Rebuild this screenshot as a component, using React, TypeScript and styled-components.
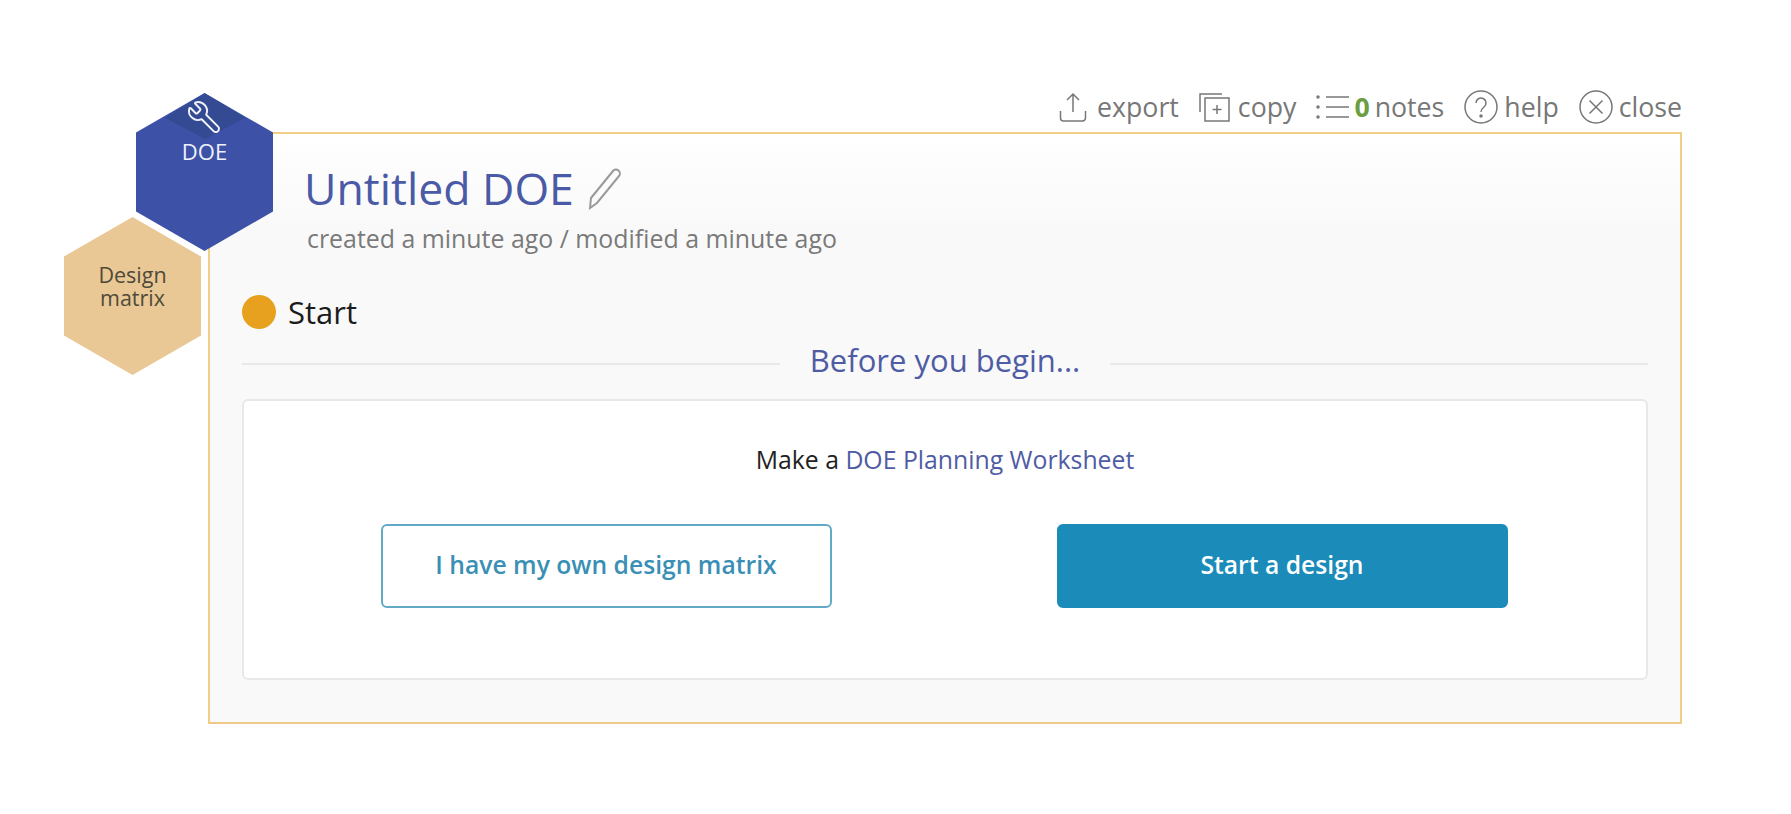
import React from "react";
import styled, { createGlobalStyle } from "styled-components";
import { Wrench } from "lucide-react";

const Global = createGlobalStyle`
  html, body { margin: 0; padding: 0; background: #fff; }
  body { font-family: "Open Sans", "Liberation Sans", sans-serif; }
`;

const Page = styled.div`
  position: relative;
  box-sizing: border-box;
  width: 1791px;
  height: 814px;
  padding: 88px 109px 0 208px;
  overflow: hidden;
`;

const Toolbar = styled.nav`
  box-sizing: border-box;
  display: flex;
  justify-content: flex-end;
  align-items: center;
  height: 44px;
  padding-bottom: 6px;
  gap: 20px;
  color: #777;
  font-size: 26.7px;
  line-height: 36px;
`;

const Tool = styled.span<{ $gap?: number }>`
  display: inline-flex;
  align-items: center;
  gap: ${(p) => p.$gap ?? 8}px;
`;

const Icon = styled.svg`
  display: block;
  flex: none;
  fill: none;
  stroke: #777;
  stroke-width: 1.5;
`;

const PencilIcon = styled(Icon)`
  stroke: #9a9a9a;
  stroke-width: 2;
`;

const NoteText = styled.span`
  display: inline-flex;
  gap: 5px;
`;

const Count = styled.b`
  color: #6a9e3f;
  font-weight: 700;
`;

const Panel = styled.section`
  box-sizing: border-box;
  height: 592px;
  padding: 24px 32px 0;
  border: 2px solid #f0cf85;
  border-bottom-color: #efc98a;
  background: linear-gradient(#fff 0, #f9f9f9 90px);
`;

const TitleRow = styled.div`
  display: flex;
  align-items: center;
  gap: 14px;
  padding-left: 62px;
  height: 60px;
`;

const Title = styled.h1`
  margin: 0;
  font-size: 44.6px;
  font-weight: 400;
  line-height: 60px;
  color: #4a5aa6;
`;

const Meta = styled.p`
  margin: 3px 0 0;
  padding-left: 65px;
  font-size: 24.9px;
  line-height: 34px;
  color: #7a7a7a;
`;

const StatusRow = styled.div`
  display: flex;
  align-items: center;
  gap: 12px;
  margin-top: 35px;
  height: 44px;
`;

const Dot = styled.span`
  width: 34px;
  height: 34px;
  border-radius: 50%;
  background: #e8a11f;
`;

const StatusText = styled.span`
  font-size: 31px;
  color: #1c1c1c;
`;

const Divider = styled.div`
  display: flex;
  align-items: center;
  gap: 30px;
  margin-top: 8px;
  height: 44px;
  font-size: 31px;
  color: #4f5ca4;
  &::before, &::after {
    content: "";
    flex: 1;
    height: 2px;
    background: #e8e8e8;
  }
`;

const DividerLabel = styled.span`
  padding-bottom: 8px;
`;

const Card = styled.div`
  box-sizing: border-box;
  height: 281px;
  margin-top: 13px;
  padding-top: 40px;
  background: #fff;
  border: 2px solid #e8e8e8;
  border-radius: 6px;
`;

const Lead = styled.p`
  margin: 0;
  height: 36px;
  line-height: 36px;
  text-align: center;
  font-size: 24.8px;
  color: #222;
`;

const DocLink = styled.a`
  color: #4f5ca4;
  text-decoration: none;
`;

const Actions = styled.div`
  display: flex;
  justify-content: center;
  gap: 225px;
  margin-top: 47px;
  padding-right: 2px;
`;

const Button = styled.button<{ $solid?: boolean }>`
  box-sizing: border-box;
  width: 451px;
  height: 84px;
  padding: 0 0 4px;
  border-radius: 6px;
  border: 2px solid ${(p) => (p.$solid ? "#1b8bb9" : "#62a9c6")};
  background: ${(p) => (p.$solid ? "#1b8bb9" : "#fff")};
  color: ${(p) => (p.$solid ? "#fff" : "#3a8fb5")};
  font: 600 24.7px "Open Sans", sans-serif;
`;

const Hex = styled.div<{ $bg: string; $x: number; $y: number }>`
  position: absolute;
  left: ${(p) => p.$x}px;
  top: ${(p) => p.$y}px;
  width: 137px;
  height: 158px;
  background: ${(p) => p.$bg};
  clip-path: polygon(50% 0, 100% 25%, 100% 75%, 50% 100%, 0 75%, 0 25%);
  display: flex;
  flex-direction: column;
  align-items: center;
  text-align: center;
`;

const Diamond = styled.div`
  position: absolute;
  left: 29px;
  top: 0;
  width: 80px;
  height: 46px;
  background: #344a93;
  clip-path: polygon(50% 0, 100% 54%, 50% 100%, 0 54%);
`;

const WrenchIcon = styled(Wrench)`
  position: absolute;
  left: 50px;
  top: 6px;
  color: #f1f3fb;
  transform: scaleX(-1);
`;

const HexLabel = styled.span`
  margin-top: 44px;
  font-size: 22px;
  line-height: 28px;
  color: #eef1fb;
`;

const MatrixLabel = styled.span`
  margin-top: 46px;
  font-size: 21.5px;
  line-height: 23px;
  color: #4f4a38;
`;

export default function App() {
  return (
    <Page>
      <Global />
      <Hex $bg="#3d52a6" $x={136} $y={93}>
        <Diamond />
        <WrenchIcon size={36} strokeWidth={1.3} />
        <HexLabel>DOE</HexLabel>
      </Hex>
      <Hex $bg="#e9c896" $x={64} $y={217}>
        <MatrixLabel>Design<br />matrix</MatrixLabel>
      </Hex>

      <Toolbar>
        <Tool $gap={10}>
          <Icon width="28" height="30" viewBox="0 0 28 30">
            <path d="M14 20V2M8 8l6-6 6 6M1.500 19v7a3 3 0 0 0 3 3h19a3 3 0 0 0 3-3v-7" />
          </Icon>
          export
        </Tool>
        <Tool $gap={8}>
          <Icon width="31" height="29" viewBox="0 0 31 29">
            <path d="M1 19V1h22" />
            <rect x="6" y="5" width="24" height="23" />
            <path d="M18 12v9M13.500 16.500h9" />
          </Icon>
          copy
        </Tool>
        <Tool $gap={5}>
          <Icon width="33" height="26" viewBox="0 0 33 26">
            <path d="M10 3h23M10 13h23M10 23h23" />
            <circle cx="2" cy="3" r="1" fill="#777" />
            <circle cx="2" cy="13" r="1" fill="#777" />
            <circle cx="2" cy="23" r="1" fill="#777" />
          </Icon>
          <NoteText><Count>0</Count><span>notes</span></NoteText>
        </Tool>
        <Tool $gap={6}>
          <Icon width="34" height="34" viewBox="0 0 34 34">
            <circle cx="17" cy="17" r="16" />
            <path d="M12 13a5 5 0 1 1 8 4c-2 1.500-3 2.500-3 5" />
            <circle cx="17" cy="26" r="1" fill="#777" />
          </Icon>
          help
        </Tool>
        <Tool $gap={6}>
          <Icon width="34" height="34" viewBox="0 0 34 34">
            <circle cx="17" cy="17" r="16" />
            <path d="M10.500 10.500l13 13M23.500 10.500l-13 13" />
          </Icon>
          close
        </Tool>
      </Toolbar>

      <Panel>
        <TitleRow>
          <Title>Untitled DOE</Title>
          <PencilIcon width="34" height="44" viewBox="0 0 34 44">
            <path d="M2 42l1-10L25 5a3.800 3.800 0 0 1 6 5L9 37z" />
          </PencilIcon>
        </TitleRow>
        <Meta>created a minute ago / modified a minute ago</Meta>
        <StatusRow>
          <Dot />
          <StatusText>Start</StatusText>
        </StatusRow>
        <Divider><DividerLabel>Before you begin...</DividerLabel></Divider>
        <Card>
          <Lead>Make a <DocLink>DOE Planning Worksheet</DocLink></Lead>
          <Actions>
            <Button>I have my own design matrix</Button>
            <Button $solid>Start a design</Button>
          </Actions>
        </Card>
      </Panel>
    </Page>
  );
}
